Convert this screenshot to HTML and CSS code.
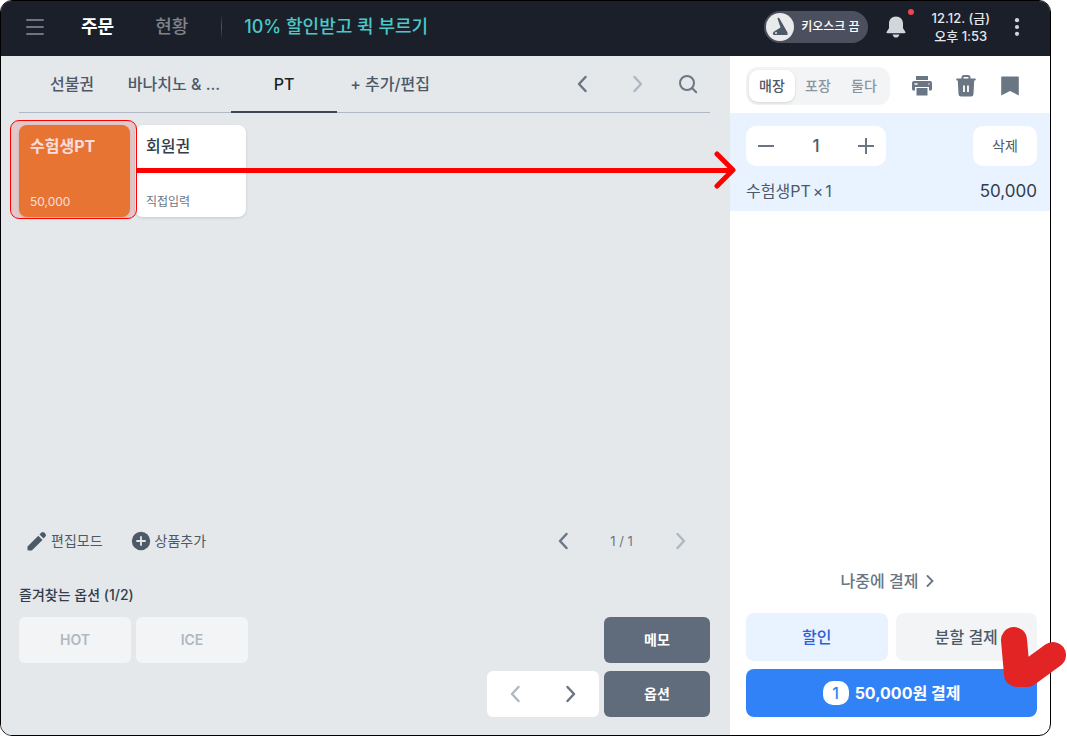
FILE: index.html
```html
<!DOCTYPE html>
<html lang="ko">
<head>
<meta charset="utf-8">
<meta name="viewport" content="width=device-width, initial-scale=1">
<title>주문</title>
<link rel="stylesheet" href="styles.css">
</head>
<body>
<div class="app">
  <header class="topbar">
    <button class="icon-btn menu-btn" aria-label="메뉴"><svg width="18" height="16" viewBox="0 0 18 16"><path d="M1 1h16M1 8h16M1 15h16" stroke="#6b7684" stroke-width="2" stroke-linecap="round"/></svg></button>
    <nav class="main-nav">
      <a href="#order" class="current">주문</a>
      <a href="#status">현황</a>
    </nav>
    <span class="divider"></span>
    <a href="#promo" class="promo">10% 할인받고 퀵 부르기</a>
    <div class="top-tools">
      <button class="kiosk"><span class="knob"><svg width="28" height="28" viewBox="0 0 28 28"><path d="M11.500 5.500q.2-1 1.200-.8.500.1.800.8L21.500 19.500V22H7.500q-1.500-2 .2-3.200L14.500 14.500z" fill="#4e5968"/><circle cx="10" cy="20" r="1" fill="#e5e8eb"/></svg></span>키오스크 끔</button>
      <button class="icon-btn bell" aria-label="알림"><svg width="20" height="22" viewBox="0 0 20 22"><path d="M10 .5C5.700.5 3 3.500 3 7.500v4.700L.7 15.800c-.5.800-.2 1.400.7 1.400h17.200c.9 0 1.200-.6.700-1.400L17 12.200V7.500C17 3.500 14.300.5 10 .5zM6.500 18.500h7c-.5 2-1.800 3.100-3.500 3.100s-3-1.100-3.500-3.100z" fill="#d1d6db"/></svg><span class="dot"></span></button>
      <time class="clock">12.12. (금)<br>오후 1:53</time>
      <button class="icon-btn" aria-label="더보기"><svg width="6" height="18" viewBox="0 0 6 18" fill="#d1d6db"><circle cx="3" cy="2.200" r="2.100"/><circle cx="3" cy="9" r="2.100"/><circle cx="3" cy="15.800" r="2.100"/></svg></button>
    </div>
  </header>
  <main class="body">
    <section class="catalog">
      <div class="tabs">
        <button class="tab">선불권</button>
        <button class="tab long">바나치노 &amp; ...</button>
        <button class="tab active">PT</button>
        <button class="tab">+ 추가/편집</button>
        <div class="tab-tools">
          <button class="icon-btn" aria-label="이전 탭"><svg class="chev" viewBox="0 0 12 18"><path d="M9.500 2L3 9l6.500 7"/></svg></button>
          <button class="icon-btn" aria-label="다음 탭" disabled><svg class="chev" viewBox="0 0 12 18"><path d="M2.500 2L9 9l-6.500 7"/></svg></button>
          <button class="icon-btn" aria-label="검색"><svg width="20" height="20" viewBox="0 0 20 20" fill="none" stroke="#6b7684" stroke-width="2" stroke-linecap="round"><circle cx="9" cy="9" r="7"/><path d="M14.200 14.200l4 4"/></svg></button>
        </div>
      </div>
      <div class="products">
        <button class="product selected"><strong>수험생PT</strong><span>50,000</span></button>
        <button class="product"><strong>회원권</strong><span>직접입력</span></button>
      </div>
      <div class="edit-row">
        <button class="text-btn"><svg width="20" height="20" viewBox="0 0 20 20" fill="#4e5968"><path d="M.5 15.500L11.300 4.700l4.200 4.200L4.800 19.500H1.500q-1 0-1-1zM12.500 3.500l1.900-1.900q1.400-1.300 2.800 0l1.200 1.200q1.400 1.400 0 2.800l-1.800 1.900z"/></svg>편집모드</button>
        <button class="text-btn"><svg width="20" height="20" viewBox="0 0 20 20"><circle cx="10" cy="10" r="9.200" fill="#4e5968"/><path d="M10 6v8M6 10h8" stroke="#e5e8eb" stroke-width="1.800" stroke-linecap="round"/></svg>상품추가</button>
        <div class="pager">
          <button class="icon-btn" aria-label="이전 페이지"><svg class="chev" viewBox="0 0 12 18"><path d="M9.500 2L3 9l6.500 7"/></svg></button>
          <span>1 / 1</span>
          <button class="icon-btn" aria-label="다음 페이지" disabled><svg class="chev" viewBox="0 0 12 18"><path d="M2.500 2L9 9l-6.500 7"/></svg></button>
        </div>
      </div>
      <h2 class="option-title">즐겨찾는 옵션 (1/2)</h2>
      <div class="options">
        <button class="option" disabled>HOT</button>
        <button class="option" disabled>ICE</button>
        <button class="dark memo">메모</button>
        <div class="option-pager">
          <button class="icon-btn" aria-label="이전 옵션" disabled><svg class="chev" viewBox="0 0 12 18"><path d="M9.500 2L3 9l6.500 7"/></svg></button>
          <button class="icon-btn" aria-label="다음 옵션"><svg class="chev" viewBox="0 0 12 18"><path d="M2.500 2L9 9l-6.500 7"/></svg></button>
        </div>
        <button class="dark opt">옵션</button>
      </div>
    </section>
    <aside class="cart">
      <div class="cart-head">
        <div class="segmented">
          <button class="on">매장</button><button>포장</button><button>둘다</button>
        </div>
        <div class="cart-tools">
          <button class="icon-btn" aria-label="인쇄"><svg width="22" height="22" viewBox="0 0 22 22" fill="#6b7684"><path d="M5 1h12v4H5zM3 6h16q2 0 2 2v6q0 1.500-1.500 1.500H18V12H4v3.500H2.500Q1 15.500 1 14V8q0-2 2-2zM5.500 13h11v7.500h-11z"/><path d="M3.500 9h3M17.500 9h1" stroke="#fff" stroke-width="1.300"/></svg></button>
          <button class="icon-btn" aria-label="비우기"><svg width="22" height="24" viewBox="0 0 22 24"><path d="M7.500 5V3.500Q7.500 2 9 2h4q1.500 0 1.500 1.500V5" fill="none" stroke="#6b7684" stroke-width="2"/><path d="M2 4.500h18q.8 0 .8 1t-.8 1h-.8L18.500 20q-.2 2.500-2.500 2.500H6Q3.700 22.500 3.500 20L2.800 6.500H2q-.8 0-.8-1t.8-1z" fill="#6b7684"/><path d="M9 11.500V18M13 11.500V18" stroke="#fff" stroke-width="1.800"/></svg></button>
          <button class="icon-btn" aria-label="저장"><svg width="18" height="20" viewBox="0 0 18 20"><path d="M1 .5h16q.8 0 .8.800v18.200L9 15 .2 19.500V1.300q0-.8.8-.8z" fill="#6b7684"/></svg></button>
        </div>
      </div>
      <div class="line-item">
        <div class="line-controls">
          <div class="stepper">
            <button class="icon-btn" aria-label="수량 감소"><svg width="18" height="18" viewBox="0 0 18 18"><path d="M1 9h16" stroke="#6b7684" stroke-width="2"/></svg></button>
            <span>1</span>
            <button class="icon-btn" aria-label="수량 증가"><svg width="18" height="18" viewBox="0 0 18 18"><path d="M1 9h16M9 1v16" stroke="#6b7684" stroke-width="2"/></svg></button>
          </div>
          <button class="delete">삭제</button>
        </div>
        <div class="line-text"><span class="item-name"><span>수험생PT</span><span>×</span><span>1</span></span><span class="price">50,000</span></div>
      </div>
      <button class="later">나중에 결제<svg width="8" height="12" viewBox="0 0 8 12"><path d="M1.500 1L6.500 6l-5 5" fill="none" stroke="#6b7684" stroke-width="1.800" stroke-linecap="round"/></svg></button>
      <div class="pay-grid">
        <button class="discount">할인</button>
        <button class="split">분할 결제</button>
        <button class="pay"><span class="count">1</span>50,000원 결제</button>
      </div>
    </aside>
  </main>
  <div class="highlight"></div>
  <div class="arrow"><svg width="22" height="38" viewBox="0 0 22 38"><path d="M3 3l16 16L3 35" fill="none" stroke="#f00" stroke-width="5" stroke-linecap="round" stroke-linejoin="round"/></svg></div>
  <svg class="check" width="67" height="63" viewBox="0 0 67 63"><path d="M14 14l3 34h10l26-19" fill="none" stroke="#e32424" stroke-width="26" stroke-linecap="round" stroke-linejoin="round"/></svg>
</div>
</body>
</html>
```
FILE: styles.css
```css
* { box-sizing: border-box; }

body {
  margin: 0;
  padding-right: 16px;
  background: #fff;
  color: #4e5968;
  font: 500 14px/20px Inter, "Noto Sans CJK KR", sans-serif;
}

button {
  margin: 0;
  padding: 0;
  border: 0;
  background: none;
  color: inherit;
  font: inherit;
  white-space: nowrap;
  cursor: pointer;
}

a { color: inherit; text-decoration: none; }
svg { display: block; flex: none; }

.app {
  position: relative;
  display: flex;
  flex-direction: column;
  min-height: 100vh;
  border: 1px solid #000;
  border-radius: 12px;
}

.icon-btn { display: grid; place-items: center; }

.chev {
  width: 12px;
  height: 18px;
  fill: none;
  stroke: #6b7684;
  stroke-width: 2.5;
  stroke-linecap: round;
  stroke-linejoin: round;
}
:disabled .chev { stroke: #b0b8c1; }

/* Top bar */
.topbar {
  display: flex;
  align-items: center;
  height: 55px;
  padding: 0 30px 3px 25px;
  border-radius: 11px 11px 0 0;
  background: #1a1f29;
  white-space: nowrap;
}
.menu-btn { margin-right: 37px; }
.main-nav {
  display: flex;
  gap: 41px;
  color: #80838c;
  font-size: 18px;
}
.main-nav .current { color: #fff; font-weight: 700; }
.divider {
  width: 1px;
  height: 26px;
  margin: 0 22px 0 33px;
  background: linear-gradient(transparent, #4e5361, transparent);
}
.promo { color: #4bc8c8; font-size: 18px; }
.top-tools {
  display: flex;
  align-items: center;
  margin-left: auto;
}
.kiosk {
  display: flex;
  align-items: center;
  gap: 7px;
  height: 32px;
  margin-right: 18px;
  padding: 0 8px 0 2px;
  border-radius: 16px;
  background: #4c505e;
  color: #fff;
  font-size: 12px;
}
.knob {
  border-radius: 50%;
  background: #e9eaec;
}
.bell { position: relative; margin-right: 26px; }
.dot {
  position: absolute;
  top: -7px;
  right: -8px;
  width: 6px;
  height: 6px;
  border-radius: 50%;
  background: #f04452;
}
.clock {
  margin-right: 24px;
  color: #e5e8eb;
  font-size: 13px;
  line-height: 18px;
  text-align: center;
}

/* Catalog */
.body { display: flex; flex: 1; }
.catalog {
  display: flex;
  flex: 1;
  flex-direction: column;
  min-width: 0;
  padding: 0 20px 18px 18px;
  border-radius: 0 0 0 11px;
  background: #e4e8eb;
}
.tabs {
  display: flex;
  height: 57px;
  border-bottom: 1px solid #b0b8c6;
}
.tab {
  width: 106px;
  height: 57px;
  border-bottom: 2px solid transparent;
  font-size: 16px;
}
.tab.long { padding-right: 8px; }
.tab.active { border-color: #3c4654; color: #191f28; }
.tab-tools {
  display: flex;
  margin-left: auto;
}
.tab-tools .icon-btn { width: 56px; }
.tab-tools .icon-btn:last-child { width: 44px; }
.products {
  display: flex;
  flex: 1;
  align-items: flex-start;
  gap: 5px;
  padding-top: 12px;
}
.product {
  display: flex;
  flex-direction: column;
  justify-content: space-between;
  width: 111px;
  height: 92px;
  padding: 11px 11px 5px;
  border-radius: 8px;
  background: #fff;
  box-shadow: 0 1px 3px #0002;
  text-align: left;
}
.product strong { color: #333d4b; font-size: 16px; font-weight: 500; }
.product span { color: #6b7684; font-size: 12px; font-weight: 400; }
.product.selected { background: #e98436; }
.product.selected strong { color: #fff; font-weight: 700; }
.product.selected span { color: #fff; }
.edit-row {
  display: flex;
  align-items: center;
  gap: 28px;
  padding-left: 8px;
  font-weight: 400;
}
.text-btn { display: flex; align-items: center; gap: 4px; }
.pager {
  display: grid;
  grid-template-columns: repeat(3, 59px);
  margin-left: auto;
  color: #6b7684;
  font-size: 13px;
  text-align: center;
}
.option-title {
  margin: 34px 0 12px;
  color: #333d4b;
  font-size: 14px;
  font-weight: 500;
}
.options {
  display: grid;
  grid-template-columns: 112px 112px 1fr 112px 106px;
  grid-auto-rows: 46px;
  gap: 8px 5px;
}
.option, .dark, .option-pager { border-radius: 6px; }
.option { background: #f2f4f6; color: #b0b8c1; font-weight: 600; }
.dark {
  grid-column: 5;
  background: #606b7b;
  color: #fff;
  font-weight: 700;
}
.option-pager {
  display: grid;
  grid-column: 4;
  grid-template-columns: 1fr 1fr;
  background: #fff;
}

/* Cart */
.cart {
  display: flex;
  flex-direction: column;
  width: 320px;
  padding-bottom: 18px;
}
.cart-head {
  display: flex;
  align-items: center;
  justify-content: space-between;
  height: 57px;
  padding: 2px 18px 0 16px;
}
.segmented {
  display: flex;
  padding: 3px;
  border-radius: 12px;
  background: #f2f4f6;
  color: #8b95a1;
}
.segmented button { width: 46px; height: 32px; border-radius: 9px; }
.segmented .on {
  background: #fff;
  box-shadow: 0 1px 3px #0002;
  color: #4e5968;
}
.cart-tools { display: flex; }
.cart-tools .icon-btn { width: 44px; }
.line-item { padding: 13px 13px 8px 16px; background: #e8f3ff; }
.line-controls { display: flex; justify-content: space-between; }
.stepper {
  display: grid;
  grid-template-columns: 40px 60px 40px;
  align-items: center;
  height: 40px;
  border-radius: 10px;
  background: #fff;
  font-size: 17px;
  text-align: center;
}
.delete {
  width: 64px;
  height: 40px;
  border-radius: 10px;
  background: #fff;
  font-weight: 400;
}
.line-text {
  display: flex;
  justify-content: space-between;
  padding-top: 13px;
  font-size: 16px;
  font-weight: 400;
  line-height: 24px;
}
.item-name { display: flex; gap: 2px; }
.price { color: #333d4b; font-size: 17px; }
.later {
  display: flex;
  align-items: center;
  justify-content: center;
  gap: 8px;
  margin: auto 0 20px;
  padding-right: 5px;
  color: #6b7684;
  font-size: 16px;
  line-height: 24px;
}
.pay-grid {
  display: grid;
  grid-template-columns: 1fr 1fr;
  grid-auto-rows: 48px;
  gap: 8px;
  padding: 0 13px 0 16px;
  font-size: 16px;
}
.pay-grid button { border-radius: 8px; }
.discount { background: #e8f3ff; color: #2f5fd9; }
.split { background: #f2f4f6; }
.pay {
  display: flex;
  grid-column: 1 / -1;
  align-items: center;
  justify-content: center;
  gap: 6px;
}
.pay-grid .pay { background: #3182f6; color: #fff; font-weight: 700; }
.count {
  width: 26px;
  height: 24px;
  border-radius: 10px;
  background: #fff;
  color: #3182f6;
  font-weight: 500;
  line-height: 24px;
}

/* Annotations over the screen */
.highlight, .arrow, .check { position: absolute; pointer-events: none; }
.highlight {
  top: 119px;
  left: 9px;
  width: 127px;
  height: 99px;
  border: 1px solid #f00;
  border-radius: 9px;
  background: #e3242429;
}
.arrow {
  top: 150px;
  right: 314px;
  left: 136px;
  display: flex;
  justify-content: flex-end;
  background: linear-gradient(#f00, #f00) left center / calc(100% - 4px) 5px no-repeat;
}
.check { right: -17px; bottom: 46px; }
```
